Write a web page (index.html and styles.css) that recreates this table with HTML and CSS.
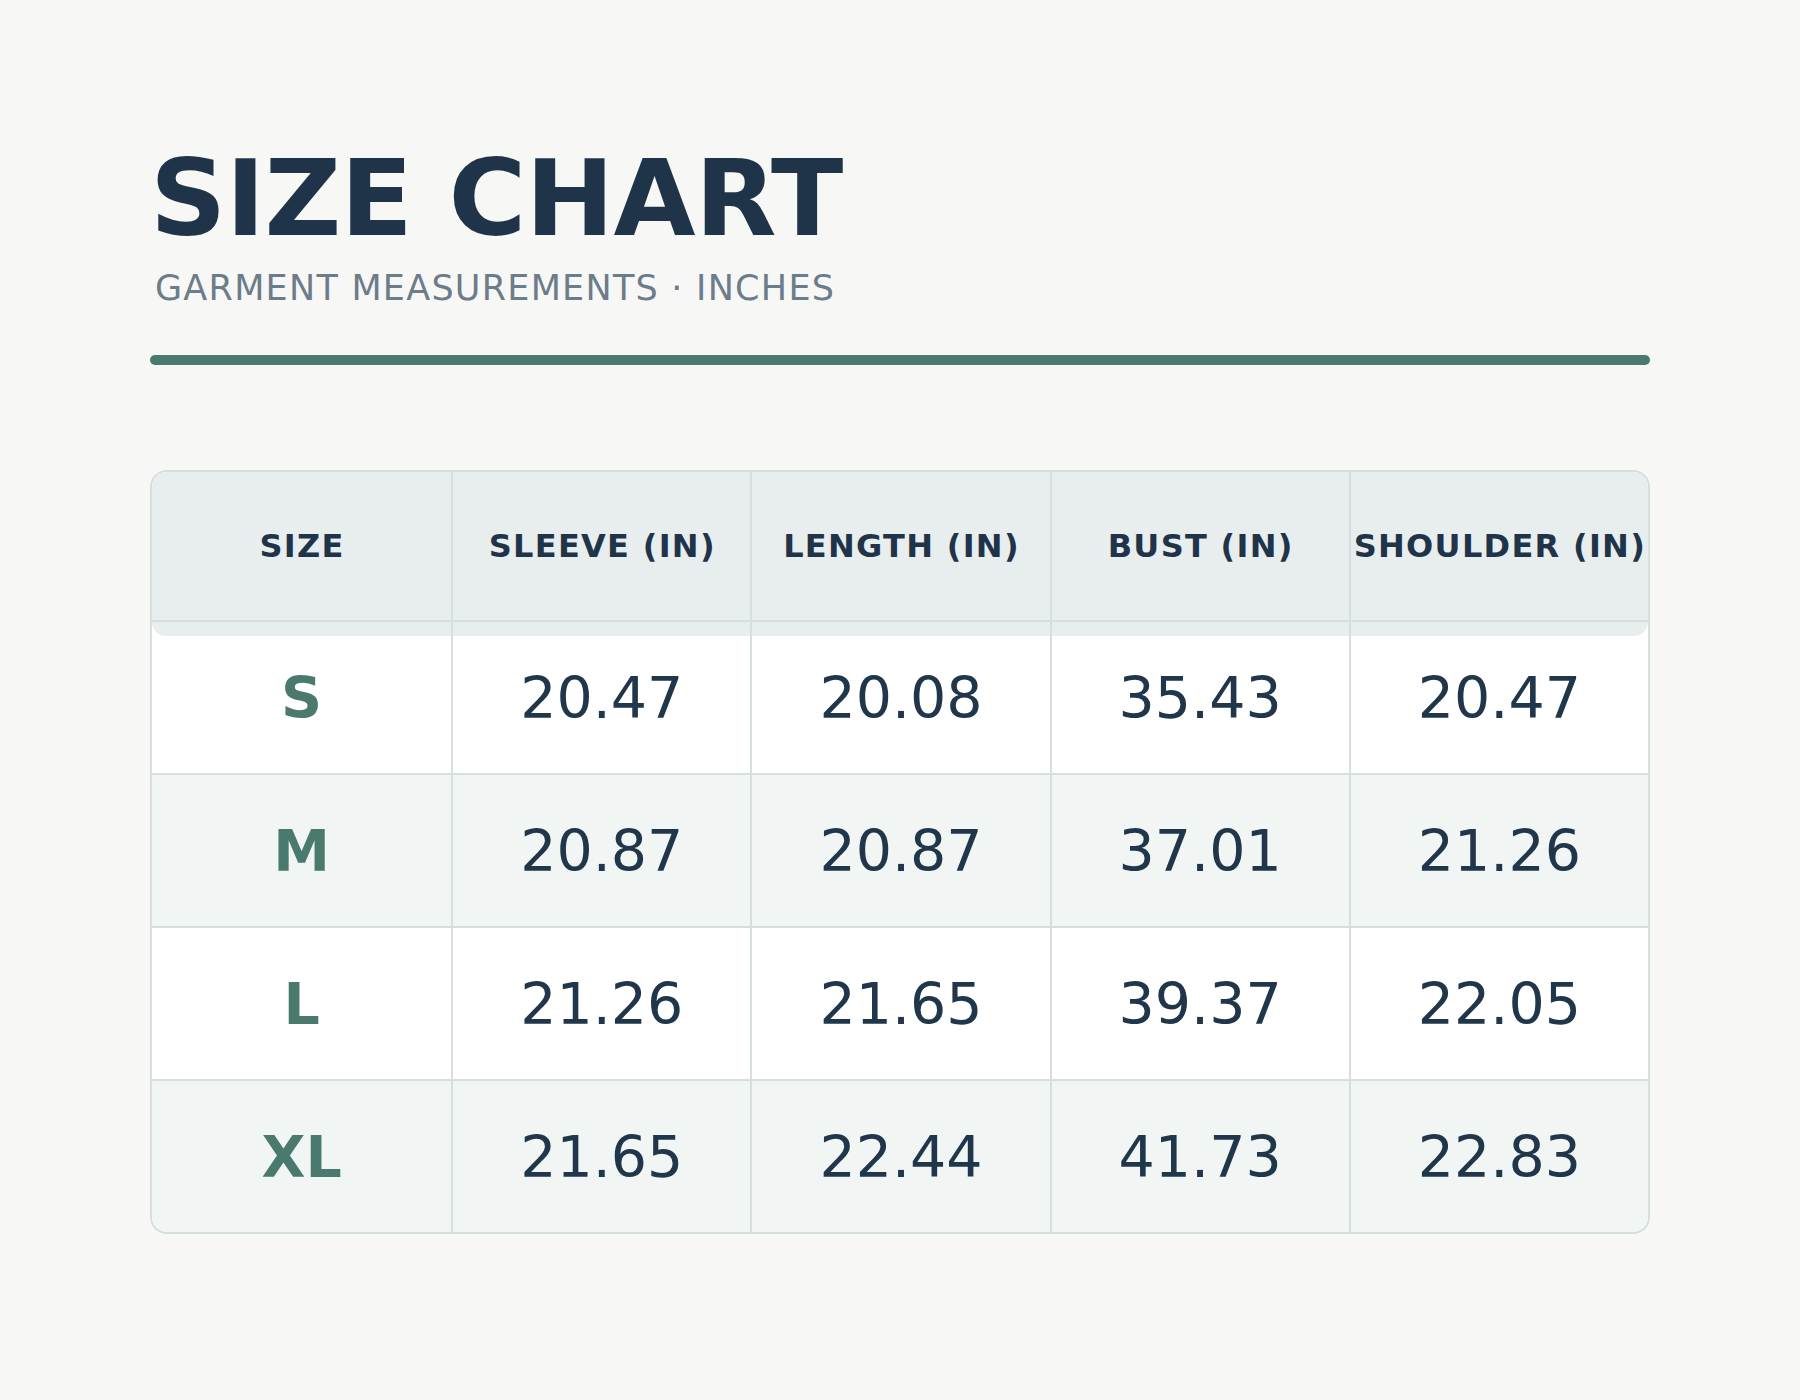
FILE: index.html
```html
<!DOCTYPE html>
<html lang="en">
<head>
<meta charset="utf-8">
<title>Size Chart</title>
<link rel="stylesheet" href="styles.css">
</head>
<body>
<main class="page">
  <header class="intro">
    <h1 class="title">SIZE CHART</h1>
    <p class="subtitle">GARMENT MEASUREMENTS · INCHES</p>
  </header>
  <div class="rule"></div>
  <section class="chart">
    <div class="row head">
      <div class="cell">SIZE</div>
      <div class="cell">SLEEVE (IN)</div>
      <div class="cell">LENGTH (IN)</div>
      <div class="cell">BUST (IN)</div>
      <div class="cell">SHOULDER (IN)</div>
    </div>
    <div class="row body first">
      <div class="cell size">S</div>
      <div class="cell">20.47</div>
      <div class="cell">20.08</div>
      <div class="cell">35.43</div>
      <div class="cell">20.47</div>
    </div>
    <div class="row body alt">
      <div class="cell size">M</div>
      <div class="cell">20.87</div>
      <div class="cell">20.87</div>
      <div class="cell">37.01</div>
      <div class="cell">21.26</div>
    </div>
    <div class="row body">
      <div class="cell size">L</div>
      <div class="cell">21.26</div>
      <div class="cell">21.65</div>
      <div class="cell">39.37</div>
      <div class="cell">22.05</div>
    </div>
    <div class="row body alt last">
      <div class="cell size">XL</div>
      <div class="cell">21.65</div>
      <div class="cell">22.44</div>
      <div class="cell">41.73</div>
      <div class="cell">22.83</div>
    </div>
  </section>
</main>
</body>
</html>
```

FILE: styles.css
```css
html, body {
  margin: 0;
  padding: 0;
  background: #f7f7f5;
}

body {
  font-family: "DejaVu Sans", "Liberation Sans", sans-serif;
  color: #1f3448;
}

.page {
  width: 1500px;
  padding: 146px 0 0 150px;
}

.intro {
  display: flex;
  flex-direction: column;
  gap: 19px;
}

.title {
  margin: 0;
  font-size: 106px;
  line-height: 1;
  font-weight: bold;
  color: #1f3448;
  letter-spacing: -0.7px;
}

.subtitle {
  margin: 0;
  font-size: 35px;
  line-height: 1;
  color: #6b7c8b;
  letter-spacing: 1.25px;
  padding-left: 5px;
}

.rule {
  margin-top: 49px;
  height: 10px;
  border-radius: 5px;
  background: #4a7a6e;
}

.chart {
  margin-top: 105px;
  border: 2px solid #d5dfdd;
  border-radius: 17px;
  overflow: hidden;
  background: #ffffff;
}

.row {
  display: grid;
  grid-template-columns: repeat(5, 1fr);
  position: relative;
}

.cell {
  display: flex;
  align-items: center;
  justify-content: center;
  position: relative;
  z-index: 1;
}

.cell + .cell {
  border-left: 2px solid #d5dfdd;
}

.head {
  background: #e8eeee;
  height: 148px;
  border-bottom: 2px solid #d5dfdd;
}

.head .cell {
  font-size: 32px;
  font-weight: bold;
  letter-spacing: 1.3px;
  color: #1f3448;
  padding-left: 1px;
}

.body {
  height: 151px;
  background: #ffffff;
  border-bottom: 2px solid #d5dfdd;
}

.body.alt {
  background: #f1f5f4;
}

.body.last {
  border-bottom: none;
}

.body.first::before {
  content: "";
  position: absolute;
  left: 0;
  right: 0;
  top: 0;
  height: 14px;
  background: #e8eeee;
  border-radius: 0 0 16px 16px;
  z-index: 0;
}

.body .cell {
  font-size: 57px;
  color: #20364b;
}

.body .cell.size {
  font-weight: bold;
  color: #4a7a6e;
}
```
